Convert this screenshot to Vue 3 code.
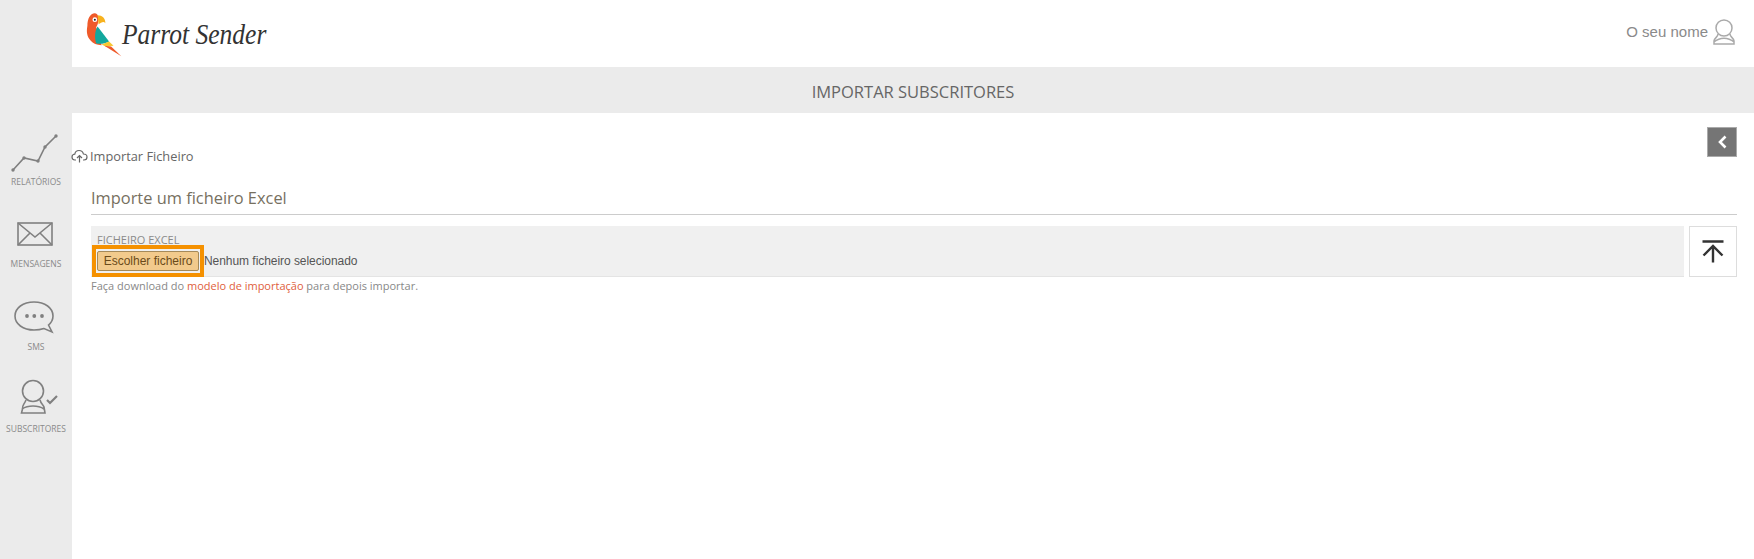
<template>
  <div class="page">
    <aside class="sidebar">
      <a class="nav-item">
        <svg class="nav-icon" width="72" height="44" viewBox="0 0 72 44">
          <g transform="translate(0 3)">
            <polyline points="13,38 24,26 38,29 45,15 56,4" />
            <circle cx="13" cy="38" r="1.700" /><circle cx="24" cy="26" r="1.700" /><circle cx="38" cy="29" r="1.700" /><circle cx="45" cy="15" r="1.700" /><circle cx="56" cy="4" r="1.700" />
          </g>
        </svg>
        <span>Relatórios</span>
      </a>
      <a class="nav-item">
        <svg class="nav-icon" width="72" height="44" viewBox="0 0 72 44">
          <rect x="18" y="12" width="34" height="22" />
          <path d="M18 12 L35 26 L52 12 M18 34 L30 22 M52 34 L40 22" />
        </svg>
        <span>Mensagens</span>
      </a>
      <a class="nav-item">
        <svg class="nav-icon" width="72" height="44" viewBox="0 0 72 44">
          <path d="M34 8 C23 8 15 14 15 22 C15 30 23 36 34 36 C38 36 41 35.500 44 34.500 L52 38 L48.500 31 C51.500 28.500 53 25.500 53 22 C53 14 45 8 34 8 Z" />
          <circle class="dot" cx="27" cy="22" r="1.900" /><circle class="dot" cx="34.300" cy="22" r="1.900" /><circle class="dot" cx="42" cy="22" r="1.900" />
        </svg>
        <span>SMS</span>
      </a>
      <a class="nav-item">
        <svg class="nav-icon" width="72" height="44" viewBox="0 0 72 44">
          <circle cx="33" cy="15" r="10.500" />
          <path d="M26 24 C24 29 22 29 22.500 33 L21.500 37 L45 37 L44 31 C43.500 29 41 28 40 24 M22 33 C28 29 38 29 44 33" />
          <path class="check" d="M47 24 L50 27 L57 20" />
        </svg>
        <span>Subscritores</span>
      </a>
    </aside>

    <div class="main">
      <header class="topbar">
        <div class="logo">
          <svg width="39" height="48" viewBox="40 35 115 140">
            <path fill="#ef5a2a" d="M72 41 C58 41 50 58 50 78 C47 95 48 110 60 122 C66 130 78 135 92 135 L76 82 C82 74 84 62 82 50 C80 44 76 41 72 41 Z" />
            <path fill="#f7b21f" d="M80 47 C94 47 103 56 103 70 C97 62 90 70 83 73 Z" />
            <path fill="#12a79d" d="M80 80 L114 124 C104 130 90 132 76 130 C70 112 72 94 80 80 Z" />
            <path fill="#f7c832" d="M92 133 L114 124 L127 137 L104 139 Z" />
            <path fill="#ef5a2a" d="M100 137 L120 139 L150 168 Z" />
            <circle cx="72" cy="60" r="7" fill="#fff" />
            <circle cx="72" cy="60" r="3" fill="#222" />
          </svg>
          <span class="logo-text">Parrot Sender</span>
        </div>
        <div class="user">
          <span>O seu nome</span>
          <svg width="24" height="28" viewBox="0 0 24 28">
            <circle cx="12" cy="10" r="8" />
            <path d="M6 16 C6 19 3 19 2 23 L2 26 L22 26 L22 23 C21 19 18 19 18 16 M2 24 C8 19 16 19 22 24" />
          </svg>
        </div>
      </header>

      <div class="title-bar">IMPORTAR SUBSCRITORES</div>

      <section class="content">
        <div class="legend-row">
          <div class="legend">
            <svg width="17" height="14" viewBox="0 0 17 14">
              <path d="M5 11 L3.800 11 C1.800 11 1 9.500 1 8 C1 6.300 2.300 5.200 3.800 5.200 C4.200 2.800 6 1.500 8 1.500 C10.400 1.500 12 3 12.400 5 C14.500 5 16 6.300 16 8 C16 9.800 14.700 11 13 11 L12 11 M8.500 13.500 L8.500 6.500 M6 9 L8.500 6.500 L11 9" />
            </svg>
            <span>Importar Ficheiro</span>
          </div>
          <button class="back" type="button" aria-label="Voltar">
            <svg width="12" height="14" viewBox="0 0 12 14"><path d="M9.500 1.500 L4 7 L9.500 12.500" /></svg>
          </button>
        </div>

        <h2 class="heading">Importe um ficheiro Excel</h2>

        <div class="file-row">
          <div class="file-box">
            <label class="file-label">FICHEIRO EXCEL</label>
            <div class="file-line">
              <span class="file-focus"><button class="file-btn" type="button">Escolher ficheiro</button></span>
              <span class="file-none">Nenhum ficheiro selecionado</span>
            </div>
          </div>
          <button class="upload" type="button" aria-label="Enviar">
            <svg width="24" height="24" viewBox="0 0 24 24"><path d="M1.500 1.500 L22.500 1.500 M12 22.500 L12 6 M2.500 15.500 L12 6 L21.500 15.500" /></svg>
          </button>
        </div>

        <p class="help">Faça download do <a>modelo de importação</a> para depois importar.</p>
      </section>
    </div>
  </div>
</template>

<script setup>
</script>

<style scoped>
.page {
  display: flex;
  min-height: 559px;
  font-family: "Open Sans", sans-serif;
  background: #fff;
}

.sidebar {
  width: 72px;
  flex-shrink: 0;
  background: #ebebeb;
  padding-top: 129px;
  box-sizing: border-box;
}

.nav-item {
  display: flex;
  flex-direction: column;
  align-items: center;
  height: 82.400px;
  font-size: 8.500px;
  line-height: 12px;
  color: #8a8a8a;
  text-transform: uppercase;
}

.nav-item span {
  margin-top: 3px;
  white-space: nowrap;
}

.nav-icon {
  display: block;
  fill: none;
  stroke: #808080;
  stroke-width: 1.600;
  overflow: visible;
}

.nav-item:nth-child(1) .nav-icon circle,
.nav-icon .dot {
  fill: #808080;
  stroke: none;
}

.nav-icon .check {
  stroke-width: 2.200;
}

.main {
  flex: 1;
  min-width: 0;
}

.topbar {
  height: 67px;
  display: flex;
  align-items: center;
  justify-content: space-between;
  padding: 0 18px 0 12px;
}

.logo {
  display: flex;
  align-items: center;
  padding-top: 2px;
}

.logo-text {
  font-family: "Liberation Serif", serif;
  font-style: italic;
  font-size: 29px;
  color: #333;
  margin-left: -1px;
  transform: scaleX(0.88);
  transform-origin: left center;
}

.user {
  display: flex;
  align-items: center;
  gap: 4px;
  font-family: "Liberation Sans", sans-serif;
  font-size: 15px;
  color: #8a8a8a;
  padding-bottom: 4px;
}

.user svg {
  fill: none;
  stroke: #aaa;
  stroke-width: 1.500;
}

.title-bar {
  height: 46px;
  box-sizing: border-box;
  padding-top: 3px;
  line-height: 44px;
  background: #ebebeb;
  text-align: center;
  font-size: 16.500px;
  color: #666;
}

.content {
  padding: 14px 17px 0 19px;
}

.legend-row {
  display: flex;
  justify-content: space-between;
  align-items: flex-start;
  height: 54px;
}

.legend {
  display: flex;
  align-items: center;
  gap: 2px;
  margin: 19px 0 0 -20px;
  font-size: 12.800px;
  line-height: 20px;
  color: #666;
}

.legend svg {
  fill: none;
  stroke: #666;
  stroke-width: 1.200;
}

.back {
  width: 30px;
  height: 30px;
  padding: 0;
  border: 1px solid #aaa;
  background: #757575;
  display: flex;
  align-items: center;
  justify-content: center;
}

.back svg {
  fill: none;
  stroke: #fff;
  stroke-width: 2.600;
}

.heading {
  margin: 0 0 11px;
  height: 34px;
  line-height: 34px;
  font-size: 16.400px;
  font-weight: 400;
  color: #77705f;
  border-bottom: 1px solid #ccc;
  box-sizing: border-box;
}

.file-row {
  display: flex;
  gap: 5px;
  height: 51px;
}

.file-box {
  flex: 1;
  background: #f0f0f0;
  border-bottom: 1px solid #e4e4e4;
  box-sizing: border-box;
}

.file-label {
  display: block;
  padding: 9px 0 0 6px;
  font-size: 11px;
  line-height: 10px;
  color: #8a8a8a;
}

.file-line {
  display: flex;
  align-items: center;
  padding-left: 1px;
}

.file-focus {
  display: block;
  border: 4px solid #f59100;
  padding: 2px 1px;
  box-sizing: border-box;
  width: 112px;
  height: 32px;
}

.file-btn {
  display: block;
  width: 100%;
  height: 20px;
  padding: 0;
  background: #f2ca8c;
  border: 1px solid #a58a5a;
  border-radius: 2px;
  font-family: "Liberation Sans", sans-serif;
  font-size: 12px;
  color: #6b4a1a;
}

.file-none {
  font-family: "Liberation Sans", sans-serif;
  font-size: 12px;
  letter-spacing: -0.050px;
  color: #555;
}

.upload {
  width: 48px;
  height: 51px;
  padding: 0;
  background: #fff;
  border: 1px solid #ddd;
  display: flex;
  align-items: center;
  justify-content: center;
}

.upload svg {
  fill: none;
  stroke: #333;
  stroke-width: 2.400;
}

.help {
  margin: 1px 0 0;
  font-size: 11px;
  line-height: 16px;
  color: #888;
}

.help a {
  color: #e0603c;
}
</style>
